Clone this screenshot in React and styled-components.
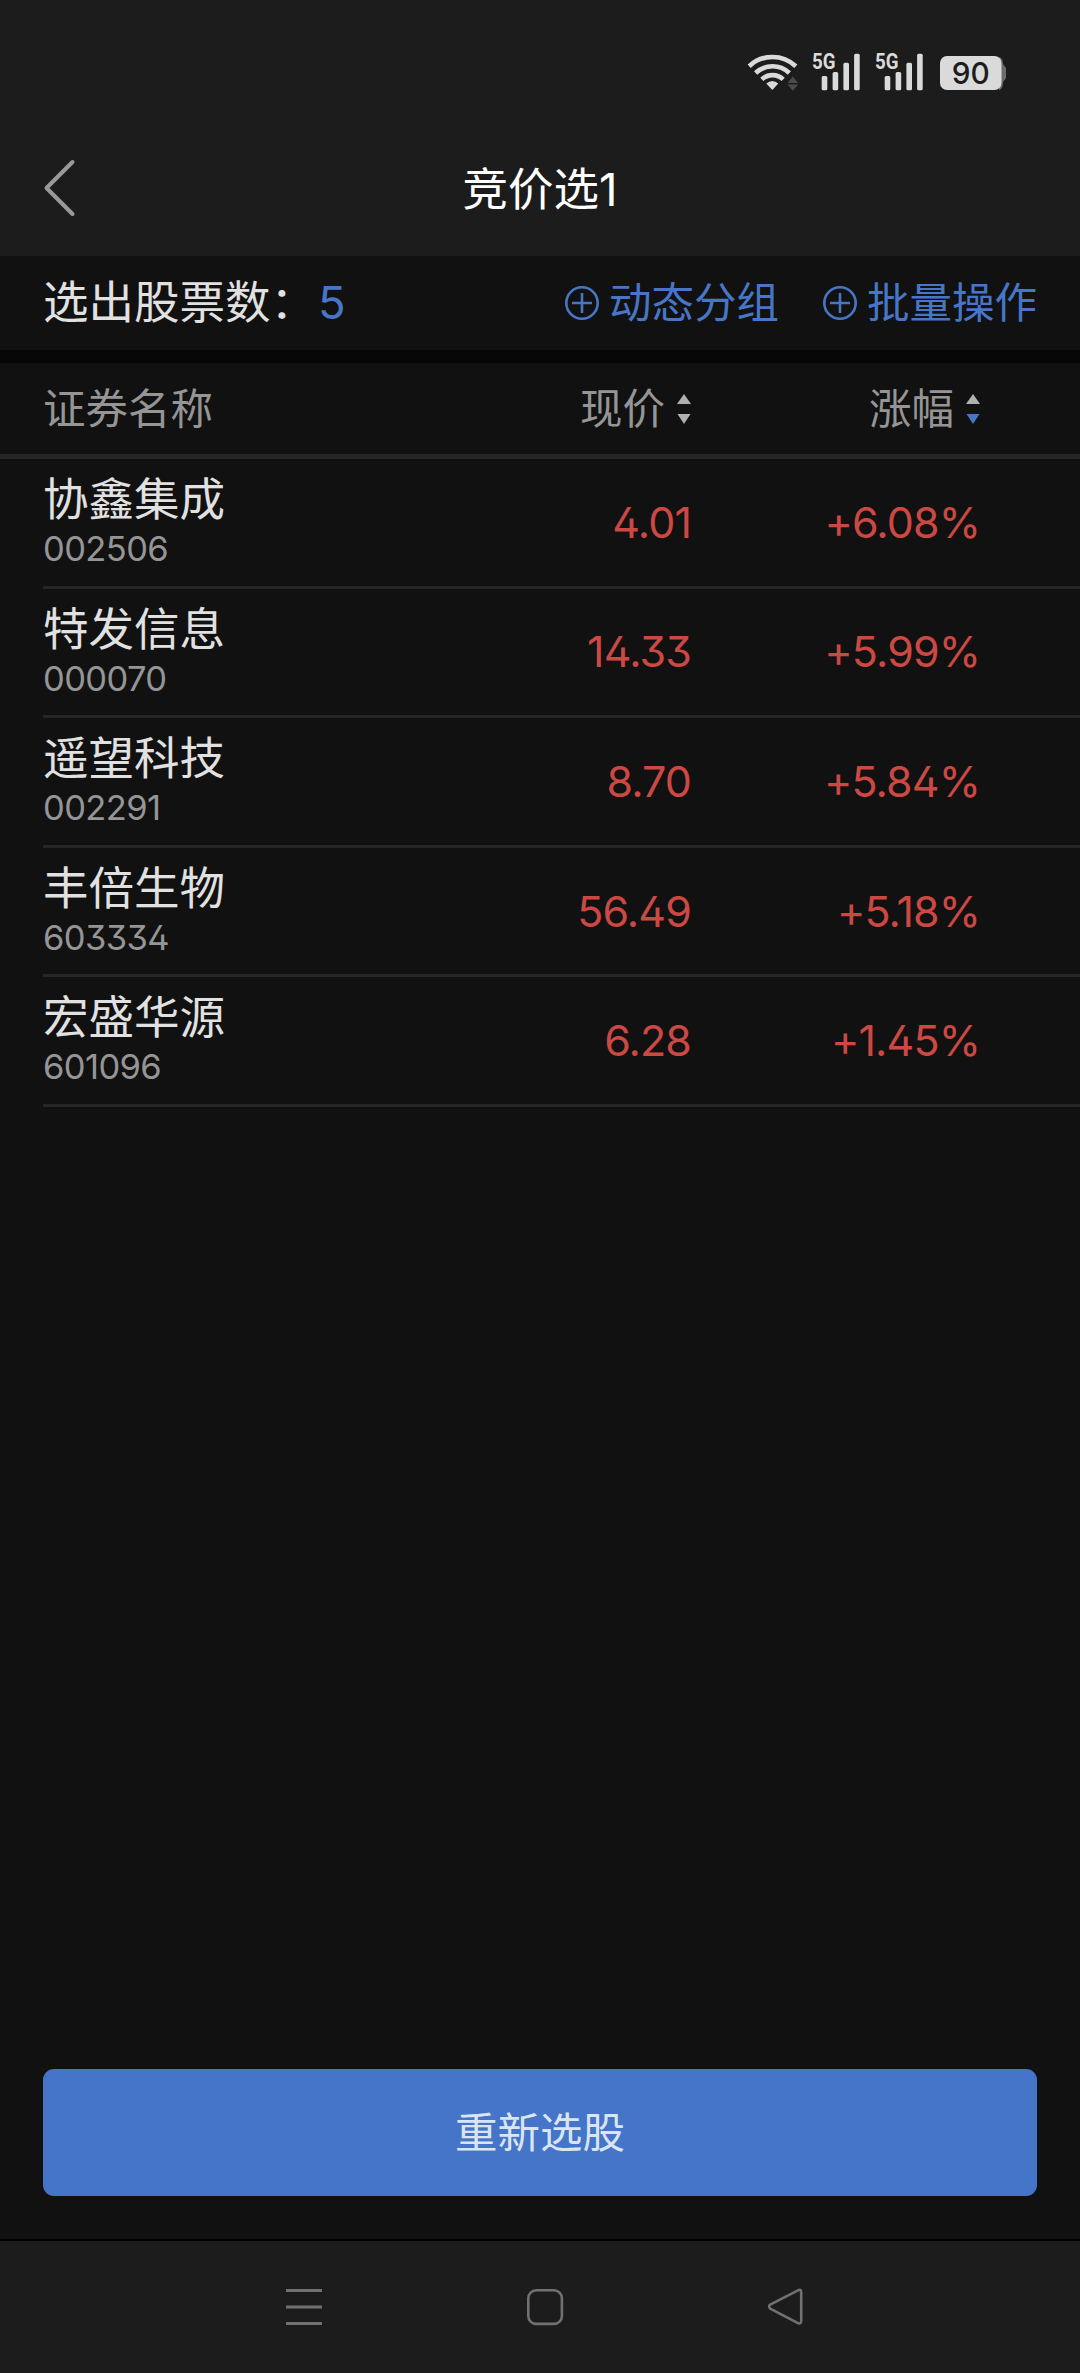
import React from 'react'
import styled, { createGlobalStyle } from 'styled-components'


const colors = {
  bar: '#1c1c1c',
  page: '#111111',
  divider: '#262626',
  text: '#e1e1e1',
  muted: '#959595',
  blue: '#4876c6',
  red: '#cb4843'
}

const stocks = [
  { name: '协鑫集成', code: '002506', price: '4.01', change: '+6.08%' },
  { name: '特发信息', code: '000070', price: '14.33', change: '+5.99%' },
  { name: '遥望科技', code: '002291', price: '8.70', change: '+5.84%' },
  { name: '丰倍生物', code: '603334', price: '56.49', change: '+5.18%' },
  { name: '宏盛华源', code: '601096', price: '6.28', change: '+1.45%' }
]

const GlobalStyle = createGlobalStyle`
  * {
    box-sizing: border-box;
  }

  body {
    margin: 0;
    background: ${colors.page};
  }
`

const Screen = styled.div`
  display: flex;
  flex-direction: column;
  width: 1080px;
  height: 2373px;
  overflow: hidden;
  background: ${colors.page};
  color: ${colors.text};
  font-family: Inter, 'Noto Sans CJK SC', sans-serif;
  font-weight: 400;
  font-feature-settings: 'cv09', 'cv02';
  white-space: nowrap;
`

const StatusBar = styled.div`
  display: flex;
  justify-content: flex-end;
  height: 120px;
  padding: 40px 72px 0 0;
  background: ${colors.bar};
`

const TitleBar = styled.header`
  display: grid;
  grid-template-columns: 200px 1fr 200px;
  align-items: center;
  height: 136px;
  background: ${colors.bar};
`

const BackButton = styled.button`
  display: flex;
  padding: 0 0 0 42px;
  border: 0;
  background: none;
`

const Title = styled.h1`
  margin: 0;
  padding-top: 4px;
  color: #fff;
  font-size: 45.5px;
  font-weight: 400;
  line-height: 60px;
  text-align: center;
`

const SummaryBar = styled.div`
  display: flex;
  align-items: center;
  height: 94px;
  padding: 0 43px;
  font-size: 45.5px;
  line-height: 60px;
`

const Count = styled.span`
  flex: 1;
  padding-left: 2px;
  color: ${colors.blue};
`

const Action = styled.button`
  display: flex;
  align-items: center;
  gap: 9px;
  margin-left: 43px;
  padding: 0;
  border: 0;
  background: none;
  color: ${colors.blue};
  font: inherit;
  font-size: 42.5px;
`

const Gap = styled.div`
  height: 13px;
  background: #060606;
`

const columns = '420px 228px 1fr'

const TableHead = styled.div`
  display: grid;
  grid-template-columns: ${columns};
  align-items: center;
  height: 96px;
  padding: 0 100px 0 43px;
  border-bottom: 5px solid ${colors.divider};
  color: ${colors.muted};
  font-size: 42.5px;
  line-height: 60px;
`

const SortHeader = styled.div`
  display: flex;
  align-items: center;
  justify-content: flex-end;
  gap: 12px;
`

const List = styled.div`
  flex: 1;
  padding-left: 43px;
`

const Row = styled.div`
  display: grid;
  grid-template-columns: ${columns};
  height: 129.6px;
  padding-right: 100px;
  border-bottom: 3px solid ${colors.divider};
`

const Name = styled.div`
  padding-top: 11px;
  font-size: 45.5px;
  line-height: 60px;
`

const Code = styled.div`
  color: ${colors.muted};
  font-size: 34.5px;
  line-height: 38px;
  letter-spacing: -0.6px;
`

const Value = styled.div`
  align-self: center;
  padding-bottom: 1px;
  color: ${colors.red};
  font-size: 43px;
  font-weight: 380;
  line-height: 60px;
  letter-spacing: -0.9px;
  text-align: right;
`

const Footer = styled.div`
  padding: 0 43px 43px;
  border-bottom: 2px solid #000;
`

const SubmitButton = styled.button`
  display: block;
  width: 100%;
  height: 127px;
  padding: 0;
  border: 0;
  border-radius: 11px;
  background: #4575c8;
  color: #dbe4f3;
  font: inherit;
  font-size: 42.5px;
  line-height: 60px;
`

const NavBar = styled.nav`
  display: flex;
  align-items: flex-start;
  gap: 201px;
  height: 132px;
  padding: 46px 0 0 284px;
  background: ${colors.bar};
`

const StatusIcons = () => (
  <svg width='262' height='54' viewBox='746 40 262 54'>
    <g fill='none' stroke='#dadada' strokeWidth='4.6' strokeLinecap='butt'>
      <path d='M749.2 66.2a34 34 0 0 1 46.6 0' />
      <path d='M755.6 73a24.6 24.6 0 0 1 33.8 0' />
      <path d='M761.8 79.4a15.6 15.6 0 0 1 21.4 0' />
    </g>
    <path d='M766.3 83.6q6-5.2 12 0l-6 6.4z' fill='#dadada' />
    <path d='M787.5 83l5.3-6.5 5.3 6.5zM787.5 84.6h10.6l-5.3 6.2z' fill='#4a4a4a' />
    {[0, 63].map(x =>
      <g key={x} transform={`translate(${x} 0)`} fill='#dadada'>
        <text
          x='812'
          y='69.3'
          fontFamily='Roboto'
          fontSize='22.5'
          fontWeight='700'
          textLength='23.5'
          lengthAdjust='spacingAndGlyphs'
        >
          5G
        </text>
        <rect x='821.7' y='76' width='5.6' height='14.2' rx='1.5' />
        <rect x='832.6' y='72' width='5.6' height='18.2' rx='1.5' />
        <rect x='843.4' y='62.7' width='5.6' height='27.5' rx='1.5' />
        <rect x='854.1' y='53.8' width='5.6' height='36.4' rx='1.5' />
      </g>
    )}
    <path d='M999 57q4 1 4 7l3 4v10l-3 4q0 7-4 8z' fill='#6b6b6b' />
    <rect x='940' y='56' width='61.5' height='34' rx='7' fill='#dadada' />
    <text
      x='951.8'
      y='84'
      fontFamily='Inter'
      fontSize='30.5'
      fontWeight='500'
      textLength='38'
      lengthAdjust='spacingAndGlyphs'
      fill='#1c1c1c'
    >
      90
    </text>
  </svg>
)

const BackIcon = () => (
  <svg width='34' height='60' viewBox='0 0 34 60' fill='none'>
    <path d='M30.5 4L4.5 30l26 26' stroke='#999' strokeWidth='4' strokeLinecap='round' strokeLinejoin='round' />
  </svg>
)

const PlusIcon = () => (
  <svg width='36' height='36' viewBox='0 0 36 36' fill='none' stroke={colors.blue} strokeWidth='2.6'>
    <circle cx='18' cy='18' r='15.7' />
    <path d='M18 8v20M8 18h20' />
  </svg>
)

const SortIcon = ({ descending }) => (
  <svg width='14' height='30' viewBox='0 0 14 30'>
    <path d='M7 0l7 10H0z' fill='#b0b0b0' />
    <path d='M7 30l6.5-10H.5z' fill={descending ? colors.blue : '#b0b0b0'} />
  </svg>
)

const MenuIcon = () => (
  <svg width='40' height='40' viewBox='0 0 40 40' stroke='#717171' strokeWidth='3'>
    <path d='M2 3.5h36M2 20h36M2 36.5h36' />
  </svg>
)

const HomeIcon = () => (
  <svg width='40' height='40' viewBox='0 0 40 40' fill='none' stroke='#717171' strokeWidth='2.6'>
    <rect x='3.3' y='3.3' width='33.6' height='33.6' rx='8' />
  </svg>
)

const NavBackIcon = () => (
  <svg width='40' height='40' viewBox='0 0 40 40' fill='none' stroke='#717171' strokeWidth='2.6'>
    <path d='M4.2 17.6Q2 19.5 4.2 21.6L32.5 36.4Q35.2 37 35.2 34V5Q35.2 2 32.5 3.2Z' strokeLinejoin='round' />
  </svg>
)

export default function App() {
  return (
    <Screen>
      <GlobalStyle />
      <StatusBar>
        <StatusIcons />
      </StatusBar>
      <TitleBar>
        <BackButton aria-label='返回'><BackIcon /></BackButton>
        <Title>竞价选1</Title>
      </TitleBar>
      <SummaryBar>
        <span>选出股票数：</span>
        <Count>{stocks.length}</Count>
        <Action><PlusIcon />动态分组</Action>
        <Action><PlusIcon />批量操作</Action>
      </SummaryBar>
      <Gap />
      <TableHead>
        <div>证券名称</div>
        <SortHeader>现价<SortIcon /></SortHeader>
        <SortHeader>涨幅<SortIcon descending /></SortHeader>
      </TableHead>
      <List>
        {stocks.map(stock =>
          <Row key={stock.code}>
            <div>
              <Name>{stock.name}</Name>
              <Code>{stock.code}</Code>
            </div>
            <Value>{stock.price}</Value>
            <Value>{stock.change}</Value>
          </Row>
        )}
      </List>
      <Footer>
        <SubmitButton>重新选股</SubmitButton>
      </Footer>
      <NavBar>
        <MenuIcon />
        <HomeIcon />
        <NavBackIcon />
      </NavBar>
    </Screen>
  )
}
